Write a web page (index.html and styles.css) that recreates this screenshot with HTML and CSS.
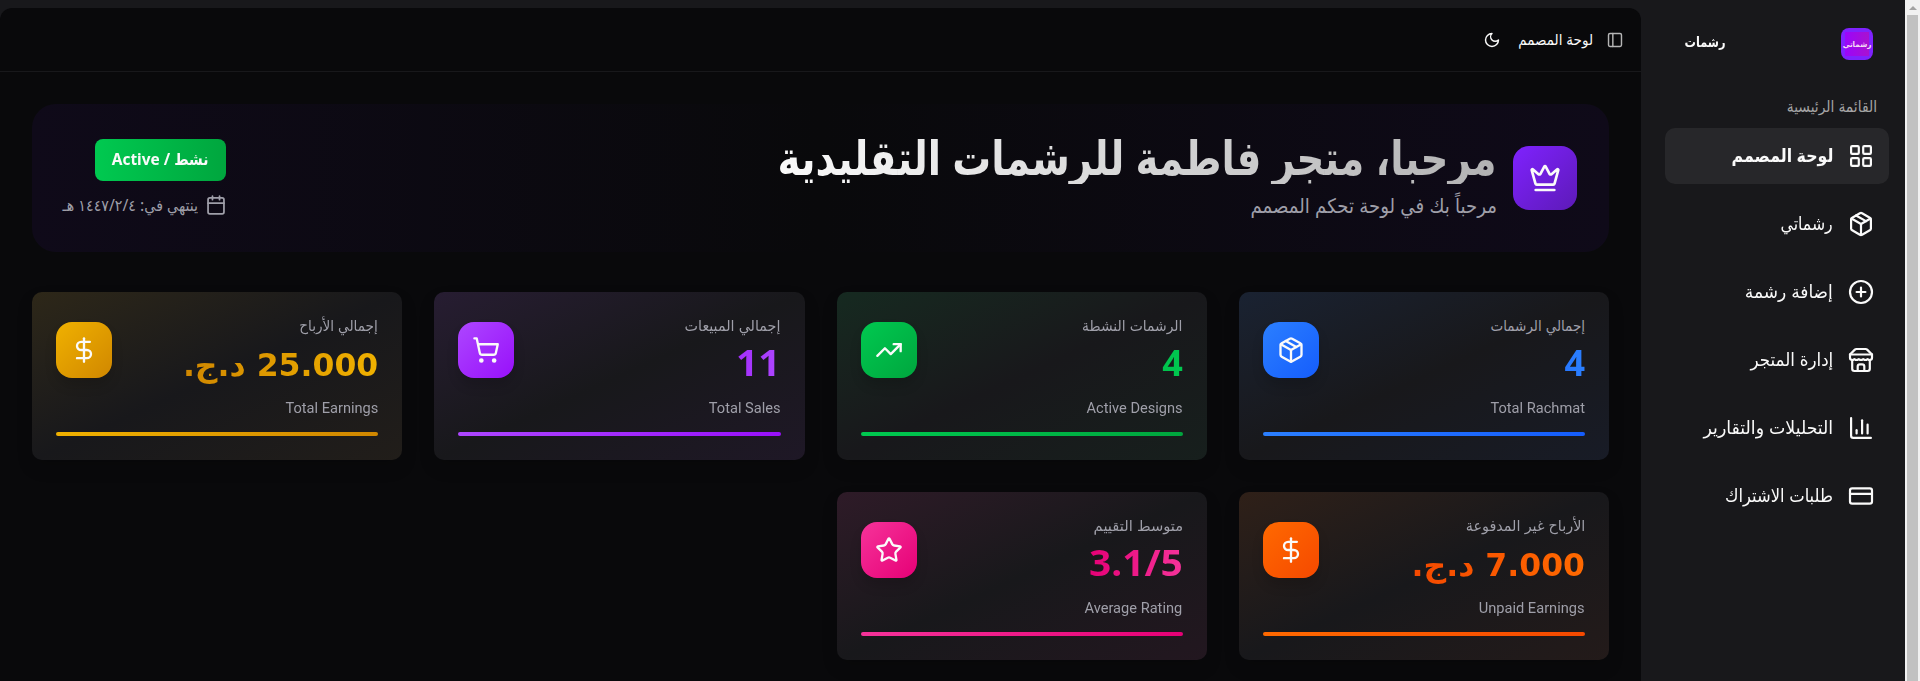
FILE: index.html
```html
<!DOCTYPE html>
<html lang="ar" dir="rtl">
<head>
<meta charset="utf-8">
<title>لوحة المصمم</title>
<link rel="stylesheet" href="styles.css">
</head>
<body>
<svg class="defs" aria-hidden="true">
<symbol id="package" viewBox="0 0 24 24"><path d="M11 21.73a2 2 0 0 0 2 0l7-4A2 2 0 0 0 21 16V8a2 2 0 0 0-1-1.73l-7-4a2 2 0 0 0-2 0l-7 4A2 2 0 0 0 3 8v8a2 2 0 0 0 1 1.73z"/><path d="M12 22V12"/><path d="M3.3 7 12 12l8.7-5"/><path d="m7.5 4.27 9 5.15"/></symbol>
<symbol id="dollar" viewBox="0 0 24 24"><path d="M12 2v20"/><path d="M17 5H9.500a3.500 3.500 0 0 0 0 7h5a3.500 3.500 0 0 1 0 7H6"/></symbol>
</svg>
<div class="app">
  <div class="scrollbar"><span class="arrow"></span><span class="thumb"></span></div>
  <aside class="sidebar">
    <div class="brand"><span class="logo"><span class="logo-in"><span class="logo-text">رشماتي</span></span></span><span class="brand-name"><span class="t f-brand">رشمات</span></span></div>
    <div class="group"><span class="t f-group">القائمة الرئيسية</span></div>
    <nav class="nav">
      <a class="item active"><svg viewBox="0 0 24 24"><rect width="7" height="7" x="3" y="3" rx="1"/><rect width="7" height="7" x="14" y="3" rx="1"/><rect width="7" height="7" x="14" y="14" rx="1"/><rect width="7" height="7" x="3" y="14" rx="1"/></svg><span class="t f-n1">لوحة المصمم</span></a>
      <a class="item"><svg><use href="#package"/></svg><span class="t f-n2">رشماتي</span></a>
      <a class="item"><svg viewBox="0 0 24 24"><circle cx="12" cy="12" r="10"/><path d="M8 12h8M12 8v8"/></svg><span class="t f-n3">إضافة رشمة</span></a>
      <a class="item"><svg viewBox="0 0 24 24"><path d="m2 7 4.410-4.410A2 2 0 0 1 7.830 2h8.340a2 2 0 0 1 1.420.590L22 7"/><path d="M4 12v8a2 2 0 0 0 2 2h12a2 2 0 0 0 2-2v-8"/><path d="M15 22v-4a2 2 0 0 0-2-2h-2a2 2 0 0 0-2 2v4"/><path d="M2 7h20"/><path d="M22 7v3a2 2 0 0 1-2 2 2.700 2.700 0 0 1-1.590-.630.700.700 0 0 0-.820 0A2.700 2.700 0 0 1 16 12a2.700 2.700 0 0 1-1.590-.630.700.700 0 0 0-.820 0A2.700 2.700 0 0 1 12 12a2.700 2.700 0 0 1-1.590-.630.700.700 0 0 0-.820 0A2.700 2.700 0 0 1 8 12a2.700 2.700 0 0 1-1.590-.630.700.700 0 0 0-.820 0A2.700 2.700 0 0 1 4 12a2 2 0 0 1-2-2V7"/></svg><span class="t f-n4">إدارة المتجر</span></a>
      <a class="item"><svg viewBox="0 0 24 24"><path d="M3 3v16a2 2 0 0 0 2 2h16"/><path d="M18 17V9"/><path d="M13 17V5"/><path d="M8 17v-3"/></svg><span class="t f-n5">التحليلات والتقارير</span></a>
      <a class="item"><svg viewBox="0 0 24 24"><rect width="20" height="14" x="2" y="5" rx="2"/><path d="M2 10h20"/></svg><span class="t f-n6">طلبات الاشتراك</span></a>
    </nav>
  </aside>
  <main class="main">
    <header class="top">
      <svg class="panel" viewBox="0 0 24 24"><rect width="18" height="18" x="3" y="3" rx="2"/><path d="M9 3v18"/></svg>
      <span class="t f-top">لوحة المصمم</span>
      <svg class="moon" viewBox="0 0 24 24"><path d="M12 3a6 6 0 0 0 9 9 9 9 0 1 1-9-9Z"/></svg>
    </header>
    <section class="hero">
      <div class="hero-start">
        <span class="crown"><svg viewBox="0 0 24 24"><path d="M11.562 3.266a.5.5 0 0 1 .876 0L15.390 8.870a1 1 0 0 0 1.516.294L21.183 5.500a.5.5 0 0 1 .798.519l-2.834 10.246a1 1 0 0 1-.956.734H5.810a1 1 0 0 1-.957-.734L2.020 6.020a.5.5 0 0 1 .798-.519l4.276 3.664a1 1 0 0 0 1.516-.294z"/><path d="M5 21h14"/></svg></span>
        <div class="hero-text">
          <h1><span class="t f-h1">مرحبا، متجر فاطمة للرشمات التقليدية</span></h1>
          <p><span class="t f-sub">مرحباً بك في لوحة تحكم المصمم</span></p>
        </div>
      </div>
      <div class="hero-end">
        <span class="badge"><span class="t f-badge">نشط / Active</span></span>
        <span class="expiry"><svg viewBox="0 0 24 24"><path d="M8 2v4M16 2v4"/><rect width="18" height="18" x="3" y="4" rx="2"/><path d="M3 10h18"/></svg><span class="t f-exp">ينتهي في: ٤‏/٢‏/١٤٤٧ هـ</span></span>
      </div>
    </section>
    <section class="grid">
      <article class="card blue"><div class="row"><div class="info"><span class="label t f-l1">إجمالي الرشمات</span><strong class="value t">4</strong></div><span class="tile"><svg><use href="#package"/></svg></span></div><span class="en t">Total Rachmat</span><span class="bar"></span></article>
      <article class="card green"><div class="row"><div class="info"><span class="label t f-l2">الرشمات النشطة</span><strong class="value t">4</strong></div><span class="tile"><svg viewBox="0 0 24 24"><path d="M16 7h6v6"/><path d="m22 7-8.500 8.500-5-5L2 17"/></svg></span></div><span class="en t">Active Designs</span><span class="bar"></span></article>
      <article class="card purple"><div class="row"><div class="info"><span class="label t f-l3">إجمالي المبيعات</span><strong class="value t f-rate">11</strong></div><span class="tile"><svg viewBox="0 0 24 24"><circle cx="8" cy="21" r="1"/><circle cx="19" cy="21" r="1"/><path d="M2.050 2.050h2l2.660 12.420a2 2 0 0 0 2 1.580h9.780a2 2 0 0 0 1.950-1.570l1.650-7.430H5.120"/></svg></span></div><span class="en t">Total Sales</span><span class="bar"></span></article>
      <article class="card yellow"><div class="row"><div class="info"><span class="label t f-l4">إجمالي الأرباح</span><strong class="value money t">25.000 د.ج.</strong></div><span class="tile"><svg><use href="#dollar"/></svg></span></div><span class="en t">Total Earnings</span><span class="bar"></span></article>
      <article class="card orange"><div class="row"><div class="info"><span class="label t f-l5">الأرباح غير المدفوعة</span><strong class="value money t">7.000 د.ج.</strong></div><span class="tile"><svg><use href="#dollar"/></svg></span></div><span class="en t">Unpaid Earnings</span><span class="bar"></span></article>
      <article class="card pink"><div class="row"><div class="info"><span class="label t f-l6">متوسط التقييم</span><strong class="value t f-rate" dir="ltr">3.1/5</strong></div><span class="tile"><svg viewBox="0 0 24 24"><path d="M11.525 2.295a.530.530 0 0 1 .950 0l2.310 4.679a2.123 2.123 0 0 0 1.595 1.160l5.166.756a.530.530 0 0 1 .294.904l-3.736 3.638a2.123 2.123 0 0 0-.611 1.878l.882 5.140a.530.530 0 0 1-.771.560l-4.618-2.428a2.122 2.122 0 0 0-1.973 0L6.396 21.010a.530.530 0 0 1-.770-.560l.881-5.139a2.122 2.122 0 0 0-.611-1.879L2.160 9.795a.530.530 0 0 1 .294-.906l5.165-.755a2.122 2.122 0 0 0 1.597-1.160z"/></svg></span></div><span class="en t">Average Rating</span><span class="bar"></span></article>
    </section>
  </main>
</div>
</body>
</html>
```
FILE: styles.css
```css
* { box-sizing: border-box; }
body { margin: 0; background: #18181b; color: #fafafa; font-family: "Noto Sans", "DejaVu Sans Condensed", "DejaVu Sans", sans-serif; overflow: hidden; }
.defs { position: absolute; width: 0; height: 0; }
svg { fill: none; stroke: currentColor; stroke-width: 2; stroke-linecap: round; stroke-linejoin: round; flex: none; }
.t { display: inline-block; white-space: nowrap; transform-origin: right center; }

.app { display: flex; height: 681px; }
.scrollbar { order: -1; width: 15px; background: #f1f1f1; display: flex; flex-direction: column; align-items: center; flex: none; }
.arrow { margin: 6px 0 5px; border: 4px solid transparent; border-top: 0; border-bottom-color: #a3a3a3; }
.thumb { flex: 1; width: 11px; background: #c1c1c1; }
.sidebar { width: 264px; flex: none; padding: 16px 16px 0 24px; }
.brand { display: flex; height: 56px; padding: 12px 16px; gap: 116px; }
.logo { width: 32px; height: 32px; border-radius: 8px; background: #7f22fe; padding: 4px; display: block; }
.logo-in { display: flex; align-items: center; justify-content: center; height: 24px; background: linear-gradient(90deg, #9b05fb, #a912cf); }
.logo-text { font-size: 8px; font-weight: 600; line-height: 10px; color: #f4d9f5; }
.brand-name { font-size: 14px; font-weight: 600; line-height: 28px; }
.group { margin-top: 19px; height: 32px; padding-right: 12px; font-size: 15.4px; line-height: 32px; color: #a5a5a6; }
.nav { display: flex; flex-direction: column; gap: 12px; margin-top: 5px; }
.item { display: flex; align-items: center; gap: 16px; height: 56px; padding: 0 16px; border-radius: 10px; font-size: 18px; line-height: 28px; }
.item .t { margin-top: -2px; }
.item svg { width: 24px; height: 24px; transform: scale(1.1); }
.item.active { background: #27272a; font-weight: 600; }
.f-brand { transform: scaleX(.9); }
.f-n1 { transform: scaleX(.975); }
.f-n2 { transform: scaleX(.97); }
.f-n3 { transform: scaleX(1.05); }
.f-n4 { transform: scaleX(1.03); }
.f-n5 { transform: scaleX(1.07); }
.f-n6 { transform: scaleX(1.01); }

.main { flex: none; width: 1641px; margin-top: 8px; height: 673px; background: #09090b; border-radius: 12px 12px 0 0; }
.top { height: 64px; border-bottom: 1px solid #18181b; display: flex; align-items: center; padding-right: 18px; font-size: 15px; }
.top .t { margin-top: -2px; }
.top svg { width: 16px; height: 16px; transform: scale(1.08); }
.panel { color: #b5b5b5; margin-left: 14px; }
.moon { margin-right: 18px; }

.hero { margin: 32px 32px 0; height: 148px; border-radius: 24px; padding: 32px; display: flex; justify-content: space-between; align-items: center; background: linear-gradient(90deg, #0f0a19, #09090b 50%, #0f0a19); }
.hero-start { display: flex; align-items: center; gap: 16px; }
.crown { width: 64px; height: 64px; border-radius: 16px; display: grid; place-items: center; background: linear-gradient(135deg, #7f22fe, #5d1ab8); }
.crown svg { width: 32px; height: 32px; }
.hero-text h1 { margin: 0; font-size: 48px; line-height: 42px; height: 48px; font-weight: 700; }
.f-h1 { background: linear-gradient(to left, #b2b2b3, #fafafa); -webkit-background-clip: text; background-clip: text; color: transparent; height: 48px; transform: scaleX(.897); }
.hero-text p { margin: 8px 0 0; font-size: 20.2px; line-height: 26px; height: 28px; color: #9f9fa9; }
.hero-end { display: flex; flex-direction: column; gap: 12px; }
.badge { width: 131px; height: 42px; border-radius: 8px; display: grid; place-items: center; background: linear-gradient(90deg, #00c950, #00a63e); font-size: 16px; font-weight: 700; line-height: 24px; }
.f-badge { margin-top: -2px; transform: scaleX(.965); transform-origin: center; }
.expiry { display: flex; align-items: center; gap: 8px; height: 24px; width: 162px; font-size: 15.8px; color: #9f9fa9; }
.expiry svg { width: 20px; height: 20px; transform: scale(1.06); }

.grid { margin: 40px 32px 0; display: grid; grid-template-columns: repeat(4, 1fr); gap: 32px; }
.card { --a: #2b7fff; --b: #155dfc; height: 168px; border-radius: 10px; padding: 24px; background: linear-gradient(to bottom right, color-mix(in srgb, var(--a) 10%, #18181b), #18181b 50%, color-mix(in srgb, var(--b) 5%, #18181b)); box-shadow: 0 8px 16px rgba(0,0,0,.15); display: flex; flex-direction: column; align-items: flex-start; }
.green { --a: #00c950; --b: #00a63e; }
.purple { --a: #ad46ff; --b: #9810fa; }
.yellow { --a: #f0b100; --b: #d08700; }
.orange { --a: #ff6900; --b: #f54900; }
.pink { --a: #f6339a; --b: #e60076; }
.row { display: flex; justify-content: space-between; width: 100%; height: 68px; }
.info { display: flex; flex-direction: column; align-items: flex-start; }
.label { font-size: 15px; line-height: 18px; height: 20px; font-weight: 500; color: #9f9fa9; }
.f-l2 { transform: scaleX(1.03); }
.f-l3 { transform: scaleX(1.06); }
.f-l4 { transform: scaleX(1.01); }
.f-l5 { transform: scaleX(1.065); }
.f-l6 { transform: scaleX(1.09); }
.value { align-self: stretch; text-align: right; font-size: 36px; line-height: 38px; height: 40px; margin-top: 8px; background: linear-gradient(to left, var(--a), var(--b)); -webkit-background-clip: text; background-clip: text; color: transparent; }
.f-rate { transform: scaleX(1.08); }
.money { font-family: "DejaVu Sans", sans-serif; font-size: 31.5px; line-height: 42px; }
.tile { width: 56px; height: 56px; margin-top: 6px; border-radius: 16px; display: grid; place-items: center; background: linear-gradient(to bottom right, var(--a), var(--b)); box-shadow: 0 8px 12px rgba(0,0,0,.14); }
.tile svg { width: 28px; height: 28px; }
.en { margin-top: 12px; font-family: Roboto, sans-serif; font-size: 15px; line-height: 24px; color: #9f9fa9; transform: scaleX(.975); }
.bar { margin-top: 12px; height: 4px; width: 100%; border-radius: 2px; background: linear-gradient(90deg, var(--a), var(--b)); }
```
